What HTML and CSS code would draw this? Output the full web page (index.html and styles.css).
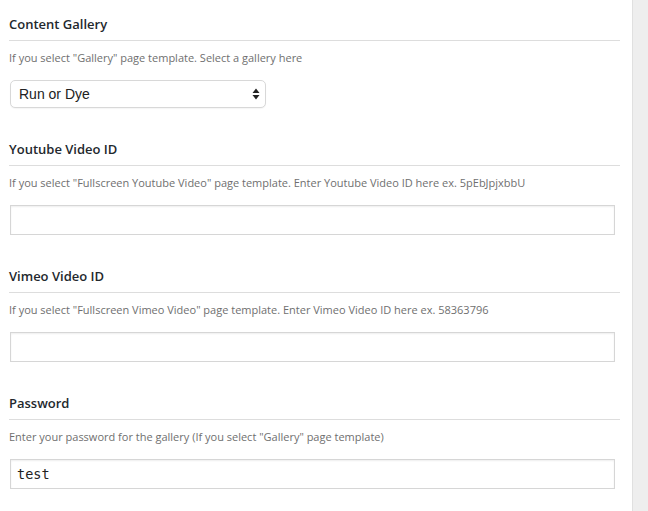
FILE: index.html
```html
<!DOCTYPE html>
<html>
<head>
<meta charset="utf-8">
<link rel="stylesheet" href="styles.css">
</head>
<body>
<div class="layout">
  <main class="content">
    <section class="field">
      <h3 class="field-title">Content Gallery</h3>
      <p class="field-desc">If you select "Gallery" page template. Select a gallery here</p>
      <div class="select-wrap">
        <select class="select">
          <option>Run or Dye</option>
        </select>
        <svg class="select-arrows" width="8" height="12" viewBox="0 0 8 12"><path d="M4 0.5 L7.5 5 L0.5 5 Z M4 11.5 L7.5 7 L0.5 7 Z" fill="#222"/></svg>
      </div>
    </section>
    <section class="field">
      <h3 class="field-title">Youtube Video ID</h3>
      <p class="field-desc">If you select "Fullscreen Youtube Video" page template. Enter Youtube Video ID here ex. 5pEbJpjxbbU</p>
      <input class="text-input" type="text" value="">
    </section>
    <section class="field">
      <h3 class="field-title">Vimeo Video ID</h3>
      <p class="field-desc">If you select "Fullscreen Vimeo Video" page template. Enter Vimeo Video ID here ex. 58363796</p>
      <input class="text-input" type="text" value="">
    </section>
    <section class="field">
      <h3 class="field-title">Password</h3>
      <p class="field-desc">Enter your password for the gallery (If you select "Gallery" page template)</p>
      <input class="text-input mono" type="text" value="test">
    </section>
  </main>
  <aside class="sidebar"></aside>
</div>
</body>
</html>
```
FILE: styles.css
```css
html, body {
  margin: 0;
  padding: 0;
  background: #fff;
}
.layout {
  display: flex;
  height: 511px;
  overflow: hidden;
}
.content {
  width: 611px;
  padding: 15px 12px 0 9px;
  font-family: "Open Sans", sans-serif;
}
.sidebar {
  flex: 1;
  background: #eeeeee;
  border-left: 1px solid #e0e0e0;
}
.field {
  margin: 0 0 32px 0;
}
.field-title {
  margin: 0;
  font-size: 13px;
  font-weight: 600;
  line-height: 18px;
  color: #23282d;
  padding-bottom: 7px;
  border-bottom: 1px solid #dddddd;
}
.field-desc {
  margin: 9px 0 0 0;
  font-size: 11px;
  line-height: 16px;
  color: #6f6f6f;
}
.select-wrap {
  position: relative;
  width: 256px;
  margin: 14px 0 0 1px;
}
.select {
  appearance: none;
  -webkit-appearance: none;
  display: block;
  width: 256px;
  height: 28px;
  margin: 0;
  padding: 0 0 0 8px;
  border: 1px solid #d8d8d8;
  border-radius: 5px;
  background: #fff;
  font-family: "Liberation Sans", Arial, sans-serif;
  font-size: 14px;
  color: #222;
  box-shadow: 0 1px 1px rgba(0,0,0,0.04);
}
.select-arrows {
  position: absolute;
  right: 6px;
  top: 8px;
  pointer-events: none;
}
.text-input {
  display: block;
  box-sizing: border-box;
  width: 605px;
  height: 30px;
  margin: 14px 0 0 1px;
  padding: 0 6px;
  border: 1px solid #d6d6d6;
  border-radius: 0;
  background: #fff;
  box-shadow: inset 0 1px 2px rgba(0,0,0,0.07);
  font-family: "Open Sans", sans-serif;
  font-size: 14px;
  color: #222;
  outline: none;
}
.mono {
  font-family: "DejaVu Sans Mono", monospace;
  font-size: 13.5px;
  color: #222;
}
```
